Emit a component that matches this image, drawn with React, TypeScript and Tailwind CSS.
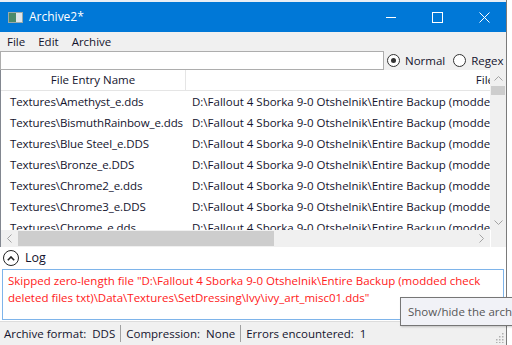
const rows = [
  "Textures\\Amethyst_e.dds",
  "Textures\\BismuthRainbow_e.dds",
  "Textures\\Blue Steel_e.DDS",
  "Textures\\Bronze_e.DDS",
  "Textures\\Chrome2_e.dds",
  "Textures\\Chrome3_e.DDS",
  "Textures\\Chrome_e.dds",
];

const font = { fontFamily: '"Open Sans", "Noto Sans", sans-serif' };

export default function App() {
  return (
    <div
      className="relative w-[512px] h-[345px] overflow-hidden bg-white text-[11.5px] text-[#14142e]"
      style={font}
    >
      <div className="flex flex-col w-[507px] h-[345px] border-r border-[#7a7a7a] bg-[#f0f0f0]">
        {/* Title bar */}
        <div className="h-[2px] bg-[#e9eef5]" />
        <div className="flex items-center h-[30px] bg-[#0078d7] text-white">
          <div className="ml-[8px] w-[15px] h-[11px] bg-[#dfe6ea] border border-[#9aa] flex">
            <div className="w-[7px] bg-[#4a8a6a]" />
          </div>
          <span className="ml-[6px] text-[12px]">Archive2*</span>
          <div className="ml-auto flex items-center h-full">
            <div className="w-[46px] flex justify-center">
              <div className="w-[10px] h-px bg-white" />
            </div>
            <div className="w-[46px] flex justify-center">
              <div className="w-[11px] h-[11px] border border-white" />
            </div>
            <div className="w-[46px] flex justify-center pl-[3px]">
              <svg width="11" height="11" viewBox="0 0 11 11">
                <path d="M0.5 0.5 L10.5 10.5 M10.5 0.5 L0.5 10.5" stroke="white" strokeWidth="1" />
              </svg>
            </div>
          </div>
        </div>

        {/* Menu */}
        <div className="flex items-center h-[19px] gap-[13px] pl-[7px] bg-[#f0f0f0]">
          <span>File</span>
          <span>Edit</span>
          <span>Archive</span>
        </div>

        {/* Search row */}
        <div className="flex items-center h-[19px]">
          <div className="w-[384px] h-[19px] bg-white border border-[#adadad]" />
          <div className="flex items-center ml-[3px] gap-[5px]">
            <div className="w-[13px] h-[13px] rounded-full border border-[#333] bg-white flex items-center justify-center">
              <div className="w-[5px] h-[5px] rounded-full bg-[#333]" />
            </div>
            <span>Normal</span>
          </div>
          <div className="flex items-center ml-[8px] gap-[5px]">
            <div className="w-[13px] h-[13px] rounded-full border border-[#333] bg-white" />
            <span>Regex</span>
          </div>
        </div>

        {/* List */}
        <div className="flex flex-col border-l border-[#828790] bg-white">
          <div className="flex">
            <div className="flex-1 flex flex-col min-w-0">
              <div className="flex h-[21px] bg-white border-b border-[#e5e5e5]">
                <div className="w-[185px] shrink-0 flex items-center justify-center border-r border-[#e5e5e5]">
                  File Entry Name
                </div>
                <div className="flex-1 flex items-center justify-end overflow-hidden">
                  <span className="-mr-[4px]">File</span>
                </div>
              </div>
              <div className="h-[139px] overflow-hidden">
                {rows.map((r) => (
                  <div key={r} className="flex h-[21px] items-center whitespace-nowrap">
                    <div className="w-[185px] shrink-0 pl-[9px] tracking-[-0.1px]">{r}</div>
                    <div className="pl-[6px] overflow-hidden">
                      D:\Fallout 4 Sborka 9-0 Otshelnik\Entire Backup (modded check deleted files txt)
                    </div>
                  </div>
                ))}
              </div>
            </div>
            {/* vertical scrollbar */}
            <div className="w-[16px] flex flex-col bg-[#f0f0f0]">
              <div className="h-[16px] flex items-center justify-center">
                <svg width="9" height="5" viewBox="0 0 9 5">
                  <path d="M0.5 4.5 L4.5 0.5 L8.5 4.5" stroke="#a3a3a3" fill="none" />
                </svg>
              </div>
              <div className="mx-[1px] h-[9px] bg-[#cdcdcd]" />
              <div className="flex-1" />
              <div className="h-[16px] flex items-center justify-center">
                <svg width="9" height="5" viewBox="0 0 9 5">
                  <path d="M0.5 0.5 L4.5 4.5 L8.5 0.5" stroke="#a3a3a3" fill="none" />
                </svg>
              </div>
            </div>
          </div>
          {/* horizontal scrollbar */}
          <div className="flex h-[17px]">
            <div className="flex-1 flex items-center bg-[#f0f0f0]">
              <div className="w-[17px] flex justify-center">
                <svg width="5" height="9" viewBox="0 0 5 9">
                  <path d="M4.5 0.5 L0.5 4.5 L4.5 8.5" stroke="#a3a3a3" fill="none" />
                </svg>
              </div>
              <div className="w-[256px] h-[15px] bg-[#cdcdcd]" />
              <div className="flex-1" />
              <div className="w-[17px] flex justify-center">
                <svg width="5" height="9" viewBox="0 0 5 9">
                  <path d="M0.5 0.5 L4.5 4.5 L0.5 8.5" stroke="#a3a3a3" fill="none" />
                </svg>
              </div>
            </div>
            <div className="w-[16px] bg-[#f0f0f0] border-l border-white" />
          </div>
        </div>

        {/* Log */}
        <div className="flex flex-col bg-white pb-[1px]">
          <div className="flex items-center h-[22px] pl-[3px] gap-[6px]">
            <div className="w-[16px] h-[16px] rounded-full border border-[#222] flex items-center justify-center">
              <svg width="8" height="5" viewBox="0 0 8 5">
                <path d="M0.8 4.2 L4 1 L7.2 4.2" stroke="#222" strokeWidth="1.6" fill="none" />
              </svg>
            </div>
            <span className="text-[12.5px]">Log</span>
          </div>
          <div className="mx-[2px] h-[51px] border border-[#7eb4ea] px-[5px] pt-[2px] text-[#ff2020] leading-[17px]">
            Skipped zero-length file "D:\Fallout 4 Sborka 9-0 Otshelnik\Entire Backup (modded check deleted files txt)\Data\Textures\SetDressing\Ivy\ivy_art_misc01.dds"
          </div>
        </div>

        {/* Status bar */}
        <div className="flex items-center flex-1 bg-[#f0f0f0] border-t border-[#dcdcdc]">
          <div className="pl-[4px] pr-[5px] border-r border-[#a0a0a0]">Archive format:&nbsp; DDS</div>
          <div className="px-[5px] border-r border-[#a0a0a0]">Compression:&nbsp; None</div>
          <div className="px-[5px]">Errors encountered:&nbsp; 1</div>
        </div>
      </div>

      {/* Tooltip */}
      <div className="absolute left-[400px] top-[297px] h-[29px] pl-[7px] pr-2 flex items-center whitespace-nowrap bg-[#f1f2f7] border border-[#767676] text-[#575757] shadow-[1px_1px_2px_rgba(0,0,0,0.2)]">
        Show/hide the archive
      </div>

      {/* Size grip */}
      <svg className="absolute left-[494px] top-[333px]" width="10" height="10" viewBox="0 0 10 10">
        {[
          [8, 0], [8, 3], [5, 3], [8, 6], [5, 6], [2, 6], [8, 9], [5, 9], [2, 9],
        ].map(([x, y], i) => (
          <rect key={i} x={x} y={y} width="1.5" height="1.5" fill="#b0b0b0" />
        ))}
      </svg>
    </div>
  );
}
